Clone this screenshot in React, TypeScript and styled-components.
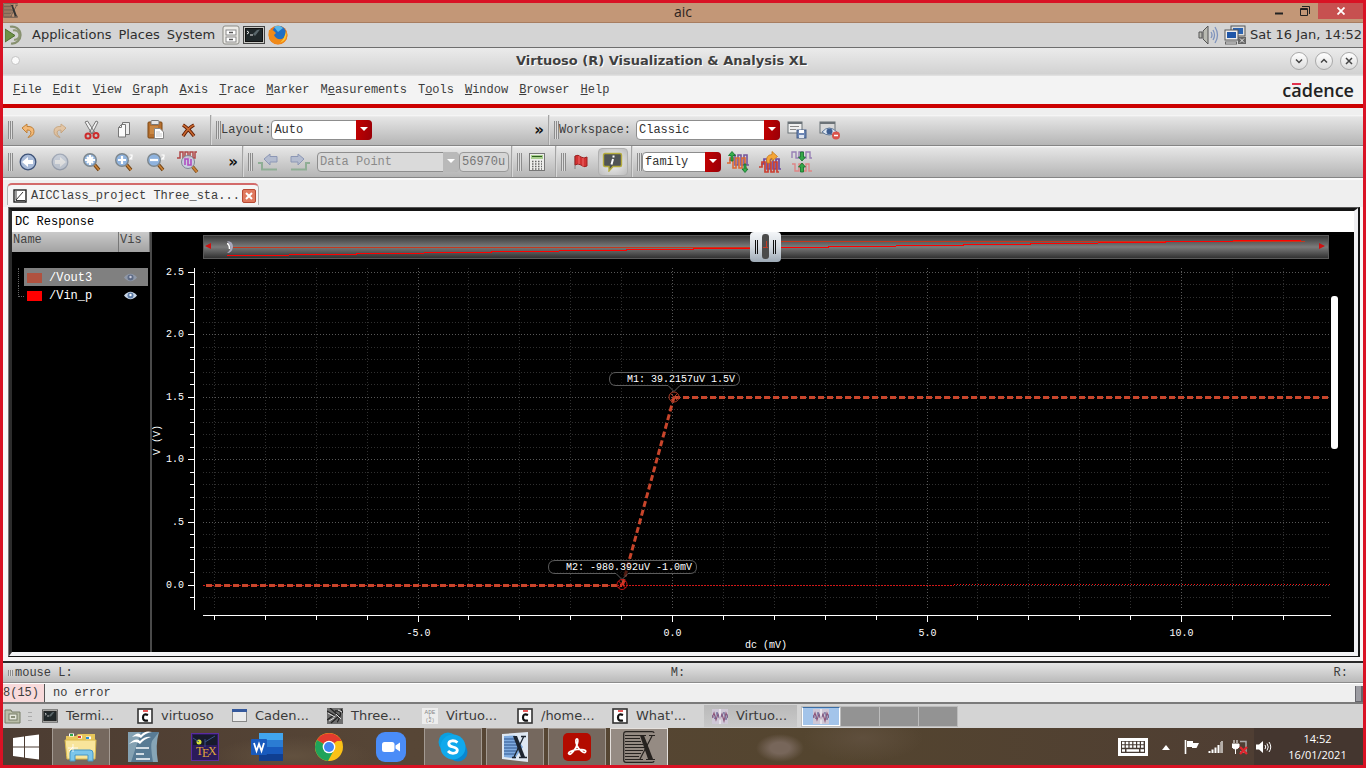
import React from "react";
import styled, { createGlobalStyle, css } from "styled-components";

const mono = `"Liberation Mono", monospace`;
const desk = `"DejaVu Sans", sans-serif`;
const win = `"Open Sans", sans-serif`;

const GlobalStyle = createGlobalStyle`
  * { box-sizing: border-box; }
  body { margin: 0; background: #d91224; }
  button, select, input { font: inherit; color: inherit; margin: 0; }
  button { padding: 0; border: 0; background: none; }
  svg { display: block; flex: none; }
`;

/* ---------- shell ---------- */
const Screen = styled.div`
  min-height: 100vh;
  display: flex;
  flex-direction: column;
  border: 3px solid #d91224;
  background: #efefef;
  font-family: ${mono};
  font-size: 12px;
  line-height: 16px;
  color: #3c3c3c;
`;
const HostTitle = styled.header`
  height: 20px;
  display: grid;
  grid-template-columns: 1fr auto 1fr;
  background: #c39777;
  border-bottom: 1px solid #a87d60;
  font: 14px/18px ${win};
  color: #2d2420;
`;
const HostControls = styled.div`
  display: flex;
  justify-content: flex-end;
  align-items: flex-start;
`;
const HostButton = styled.button<{ $close?: boolean }>`
  width: ${(p) => (p.$close ? 45 : 26)}px;
  height: 16px;
  display: flex;
  align-items: center;
  justify-content: center;
  background: ${(p) => (p.$close ? "#c75050" : "transparent")};
`;
const DeskPanel = styled.div`
  height: 25px;
  display: flex;
  align-items: center;
  gap: 7px;
  padding: 0 1px 0 2px;
  background: #d4d4d4;
  border-bottom: 1px solid #6e6e6e;
  font: 13px/20px ${desk};
  color: #2e2e2e;
`;
const PanelIcons = styled.div`
  display: flex;
  align-items: center;
  gap: 3px;
`;
const PanelTray = styled.div`
  margin-left: auto;
  display: flex;
  align-items: center;
  gap: 4px;
`;
const WindowTitle = styled.div`
  height: 28px;
  display: grid;
  grid-template-columns: 74px 1fr 74px;
  align-items: center;
  background: linear-gradient(#ebebeb, #d2d2d2 92%, #e4e4e4);
  font: bold 13px/18px ${desk};
  text-align: center;
  text-shadow: 1px 1px 0 #fff;
  color: #3f3f3f;
  padding: 0 5px 3px 8px;
`;
const TitleText = styled.span`
  padding-right: 46px;
`;
const Dot = styled.span`
  width: 9px;
  height: 9px;
  border-radius: 50%;
  background: #fafafa;
  border: 1px solid #c4c4c4;
`;
const WindowButtons = styled.div`
  display: flex;
  gap: 7px;
  justify-content: flex-end;
`;
const RoundButton = styled.button`
  width: 18px;
  height: 18px;
  border: 1px solid #a9a9a9;
  border-radius: 50%;
  background: linear-gradient(#fff, #dcdcdc);
  display: flex;
  align-items: center;
  justify-content: center;
`;
const MenuBar = styled.nav`
  height: 32px;
  display: flex;
  align-items: center;
  gap: 11px;
  padding: 0 9px 0 10px;
  background: #f3f3f3;
  border-bottom: 4px solid #cc0000;
`;
const Logo = styled.span`
  margin-left: auto;
  font: 600 18px/20px ${win};
  color: #222;
`;
const LogoA = styled.span`
  position: relative;
  &::before {
    content: "";
    position: absolute;
    left: 1px;
    right: 1px;
    top: 5px;
    height: 2px;
    background: #e2334d;
  }
`;

/* ---------- tool bars ---------- */
const ToolBars = styled.div`
  padding-top: 7px;
  border-bottom: 2px solid #fbfbfb;
`;
const ToolBar = styled.div`
  height: 32px;
  display: flex;
  border-bottom: 1px solid #858585;
  background: linear-gradient(#fafafa 0, #e5e5e5 2px, #b5b5b5);
  &:first-child { height: 31px; }
`;
const Section = styled.div<{ $w?: number }>`
  flex: ${(p) => (p.$w ? `0 0 ${p.$w}px` : "1 1 0")};
  min-width: 0;
  display: flex;
  align-items: center;
  gap: 2px;
  padding-left: 5px;
  & + & {
    border-left: 1px solid #a4a4a4;
    box-shadow: inset 1px 0 0 #d8d8d8;
  }
`;
const Grip = styled.span<{ $h?: number }>`
  flex: none;
  width: 5px;
  height: ${(p) => p.$h ?? 18}px;
  margin-right: -2px;
  background: repeating-linear-gradient(90deg, #8c8c8c 0 1px, #dcdcdc 1px 2px);
`;
const ToolButton = styled.button<{ $on?: boolean }>`
  flex: none;
  width: 30px;
  height: 28px;
  display: flex;
  align-items: center;
  justify-content: center;
  ${(p) =>
    p.$on &&
    css`
      background: radial-gradient(#f4f4f4, #bdbdbd);
      border: 1px solid #b0b0b0;
      border-radius: 4px;
    `}
`;
const More = styled.button`
  margin: 0 4px 0 auto;
  font: bold 15px/16px ${desk};
  color: #111;
`;
const Field = styled.label`
  display: flex;
  align-items: center;
`;
const Combo = styled.span<{ $w: number; $off?: boolean; $gap?: number }>`
  position: relative;
  display: block;
  width: ${(p) => p.$w}px;
  margin-left: ${(p) => p.$gap ?? 0}px;
  select {
    appearance: none;
    display: block;
    width: 100%;
    height: 20px;
    padding: 0 18px 0 2px;
    border: 1px solid #8d8d8d;
    border-radius: 4px;
    background: ${(p) => (p.$off ? "#dadada" : "#fff")};
    color: ${(p) => (p.$off ? "#8a8a8a" : "#333")};
    opacity: 1;
  }
`;
const ComboArrow = styled.span<{ $off?: boolean }>`
  position: absolute;
  right: 0;
  top: 0;
  width: 16px;
  height: 20px;
  border-radius: 0 4px 4px 0;
  pointer-events: none;
  background: ${(p) => (p.$off ? "#b9b9b9" : "linear-gradient(100deg, #c40000, #980008)")};
  &::after {
    content: "";
    position: absolute;
    left: 4px;
    top: 7px;
    border: 4px solid transparent;
    border-top-color: #fff;
    border-bottom: 0;
  }
`;
const ValueInput = styled.input`
  && {
    width: 50px;
    height: 20px;
    padding: 0 2px;
    margin-left: -2px;
    border: 1px solid #999;
    border-radius: 4px;
    background: #d6d6d6;
    color: #777;
  }
`;

/* ---------- tabs and plot frame ---------- */
const TabStrip = styled.div`
  height: 27px;
  padding: 3px 4px 0;
  display: flex;
`;
const Tab = styled.div`
  display: flex;
  align-items: center;
  height: 22px;
  gap: 4px;
  padding: 1px 2px 0 5px;
  background: #f5f5f5;
  border: 1px solid #b4b4b4;
  border-top: 2px solid #d36a6a;
  border-bottom: 0;
  border-radius: 5px 5px 0 0;
`;
const TabClose = styled.button`
  width: 14px;
  height: 14px;
  margin-left: -2px;
  border: 1px solid #b84a34;
  border-radius: 2px;
  background: #e07a5f;
  display: flex;
  align-items: center;
  justify-content: center;
`;
const PlotArea = styled.main`
  flex: 1;
  display: flex;
  padding: 0 3px 4px 5px;
  background: #f8f6f6;
  border-bottom: 2px solid #2a2a2a;
`;
const PlotOuter = styled.div`
  flex: 1;
  min-width: 0;
  display: flex;
  border-style: solid;
  border-width: 1px 2px 1px 1px;
  border-color: #555 #151515 #151515 #777;
`;
const PlotInner = styled.div`
  flex: 1;
  min-width: 0;
  display: flex;
  flex-direction: column;
  border-style: solid;
  border-width: 3px 4px 4px 3px;
  border-color: #151515 #efeff2 #f3f3f5 #2c2c2c;
  background: #000;
`;
const PlotTitle = styled.h1`
  margin: 0;
  height: 21px;
  padding: 1px 3px 0;
  background: #fff;
  color: #000;
  font: 12px/21px ${mono};
`;
const PlotBody = styled.div`
  flex: 1;
  display: flex;
`;
const Legend = styled.div`
  flex: none;
  width: 140px;
  border-right: 2px solid #4a4a4a;
`;
const TraceTable = styled.table`
  width: 100%;
  border-collapse: collapse;
  table-layout: fixed;
  color: #fff;
  th {
    height: 20px;
    padding: 0 0 0 1px;
    text-align: left;
    vertical-align: top;
    font-weight: normal;
    color: #444;
    background: linear-gradient(#cacaca, #a2a2a2);
    border-right: 1px solid #777;
  }
  tbody::before {
    content: "";
    display: block;
    height: 16px;
  }
  td { padding: 0; height: 18px; }
`;
const NameCell = styled.div`
  display: flex;
  height: 18px;
  line-height: 18px;
`;
const Branch = styled.span<{ $last?: boolean }>`
  width: 12px;
  padding-left: 6px;
  &::before {
    content: "";
    display: block;
    height: ${(p) => (p.$last ? 10 : 18)}px;
    border-left: 1px dotted #666;
    border-bottom: ${(p) => (p.$last ? "1px dotted #666" : "0")};
  }
`;
const TraceName = styled.span<{ $sel?: boolean }>`
  flex: 1;
  display: flex;
  align-items: center;
  gap: 7px;
  padding: 1px 0 0 3px;
  background: ${(p) => (p.$sel ? "#808080" : "transparent")};
`;
const Swatch = styled.span<{ $c: string }>`
  width: 15px;
  height: 10px;
  background: ${(p) => p.$c};
`;
const EyeButton = styled.button<{ $sel?: boolean }>`
  width: 29px;
  height: 18px;
  display: flex;
  align-items: center;
  padding-left: 5px;
  background: ${(p) => (p.$sel ? "#808080" : "transparent")};
`;
const ChartSvg = styled.svg`
  flex: 1 1 0;
  min-width: 0;
  background: #000;
  font: 10px ${mono};
`;

/* ---------- status rows ---------- */
const MouseBar = styled.div`
  height: 20px;
  display: grid;
  grid-template-columns: 1fr auto 1fr;
  align-items: center;
  padding: 0 15px 0 5px;
  background: linear-gradient(#e6e6e6, #bababa);
  border-bottom: 1px solid #8c8c8c;
  span:last-child { text-align: right; }
`;
const MouseLeft = styled.span`
  display: flex;
  align-items: center;
  gap: 4px;
`;
const StatusBar = styled.div`
  height: 21px;
  display: flex;
  align-items: stretch;
  border-top: 1px solid #fff;
  border-bottom: 2px solid #7a7a7a;
  line-height: 19px;
`;
const StatusCode = styled.span`
  width: 42px;
  overflow: hidden;
  background: #f8dadb;
  border-right: 1px solid #555;
`;
const StatusText = styled.span`
  flex: 1;
  padding-left: 8px;
`;
const StatusBlock = styled.span`
  width: 8px;
  margin-top: 2px;
  background: #9c9ca2;
  border: 1px solid #66666c;
  border-width: 0 2px 1px 1px;
`;
const WindowList = styled.div`
  height: 24px;
  display: flex;
  align-items: center;
  padding-left: 1px;
  background: #d4d4d4;
  font: 13px/20px ${desk};
  color: #3a3a3a;
`;
const ListGrip = styled.span`
  width: 4px;
  height: 9px;
  margin: 0 2px 0 7px;
  background: repeating-linear-gradient(#aaa 0 1px, transparent 1px 4px);
`;
const TaskButton = styled.button<{ $on?: boolean }>`
  width: 95px;
  height: 22px;
  display: flex;
  align-items: center;
  gap: 8px;
  padding: 0 0 0 8px;
  white-space: nowrap;
  ${(p) =>
    p.$on &&
    css`
      width: 93px;
      margin-left: 5px;
      background: linear-gradient(#b9b9b9, #c9c9c9);
    `}
`;
const Pager = styled.div`
  margin-left: 4px;
  display: flex;
  gap: 1px;
  padding: 1px;
  background: #bcbcbc;
`;
const Desk = styled.button<{ $on?: boolean }>`
  width: 38px;
  height: 19px;
  background: ${(p) => (p.$on ? "#a3c4ea" : "#939393")};
  border: ${(p) => (p.$on ? "1px solid #fff" : "0")};
  border-top-color: #3c6ea5;
  display: flex;
  align-items: center;
  justify-content: center;
`;

/* ---------- host task bar ---------- */
const TaskBar = styled.footer`
  height: 37px;
  display: flex;
  align-items: stretch;
  gap: 4px;
  background:
    radial-gradient(ellipse 24px 14px at 777px 20px, #77665a 40%, transparent),
    radial-gradient(ellipse 60px 24px at 860px 10px, #5f4f3d, transparent),
    radial-gradient(ellipse 80px 20px at 290px 28px, #62513f, transparent),
    linear-gradient(90deg, #4c3c32, #574636 30%, #54452f 60%, #4f3e33 92%, #44362f 92%);
  font: 11px/16px ${win};
  color: #fff;
`;
const AppButton = styled.button<{ $open?: boolean; $focus?: boolean }>`
  width: 58px;
  display: flex;
  align-items: center;
  justify-content: center;
  ${(p) =>
    p.$open &&
    css`
      background: ${p.$focus ? "#958b83" : "#75685e"};
      border: 1px solid ${p.$focus ? "#e4e0dc" : "#a39a92"};
      border-bottom: 0;
    `}
`;
const StartButton = styled(AppButton)`
  width: 45px;
`;
const Tray = styled.div`
  margin-left: auto;
  display: flex;
  align-items: center;
  gap: 8px;
`;
const Clock = styled.time`
  width: 83px;
  padding-right: 8px;
  text-align: center;
`;

/* ---------- icons ---------- */
type IcoProps = { w?: number; h?: number; box?: string; children: React.ReactNode };
const Ico = ({ w = 18, h = w, box, children }: IcoProps) => (
  <svg width={w} height={h} viewBox={box ?? `0 0 ${w} ${h}`} fill="none" aria-hidden="true">{children}</svg>
);

const XMark = ({ w = 15, h = 15, c = "#333" }) => (
  <Ico w={w} h={h} box="0 0 32 32">
    <path d="M31 2Q31 0.700 29 0.700H3Q0.700 0.700 0.700 3V29Q0.700 31.300 3 31.300H29Q31 31.300 31 30" stroke={c} strokeWidth="1.200" />
    <path d="M2 4.500H16M2 7.500H17M2 10.500H18M2 13.500H20M2 16.500H22M2 19.500H20M2 22.500H18M2 25.500H16M2 28.500H14" stroke={c} strokeWidth="1.100" />
    <path d="M17 4.500H21L30 28H25Z" fill={c} />
    <path d="M15 4.500H23M26 4.500H32M29 5L17 28M14 28.500H20M23 28.500H32" stroke={c} strokeWidth="1.200" />
  </Ico>
);
const Speaker = () => (
  <Ico w={22} h={20}>
    <path d="M1 7H4V13H1Z M5 6L10 1V19L5 14Z" fill="#b9bab2" stroke="#555" />
    <path d="M13 7Q15 10 13 13 M15 5Q18 10 15 15 M17 2Q22 10 17 18" stroke="#7e93bd" strokeWidth="1.300" />
  </Ico>
);
const Computers = () => (
  <Ico w={22} h={20}>
    <rect x="7" y="1" width="14" height="10" fill="#ddd" stroke="#555" />
    <rect x="9" y="3" width="10" height="6" fill="#2b63b0" />
    <rect x="1" y="5" width="13" height="10" fill="#eee" stroke="#555" />
    <rect x="3" y="7" width="9" height="6" fill="#1f56a8" />
    <path d="M1 18H13" stroke="#666" strokeWidth="3" /><path d="M2 18H12" stroke="#eee" />
    <rect x="14" y="12" width="8" height="7" fill="#666" /><path d="M16 13.500L20 17.500M20 13.500L16 17.500" stroke="#eee" />
  </Ico>
);
const Mate = () => (
  <Ico w={20} h={20}>
    <path d="M5 1.800A8.500 8.500 0 1 1 6 18.500" stroke="#87906f" strokeWidth="2.200" />
    <path d="M8 5.500A4.800 4.800 0 1 1 9 14.800" stroke="#8d9872" strokeWidth="2" />
    <path d="M0 4L10 10.500 0 17Z" fill="#6e9247" stroke="#4f6f30" />
  </Ico>
);
const Cabinet = () => (
  <Ico w={18} h={20}>
    <rect x="1" y="1" width="16" height="18" rx="2" fill="#ecebe7" stroke="#8b8b85" />
    <rect x="4" y="5" width="10" height="5" fill="#fff" stroke="#888" /><rect x="4" y="12" width="10" height="5" fill="#fff" stroke="#888" />
    <path d="M7 7.500H11 M7 14.500H11" stroke="#555" strokeWidth="1.500" />
  </Ico>
);
const Terminal = ({ w = 22, h = 18 }) => (
  <Ico w={w} h={h} box="0 0 22 18">
    <rect x=".5" y=".5" width="21" height="17" fill="#c9c9c5" stroke="#444" />
    <rect x="2.500" y="2.500" width="17" height="13" fill="#20282a" stroke="#111" />
    <path d="M4 5L6 6.500 4 8 M7 9H10" stroke="#eee" /><path d="M10 8L14 4 17 3.500 12 10Z" fill="#59666a" />
  </Ico>
);
const Firefox = () => (
  <Ico w={20} h={20}>
    <circle cx="10" cy="10" r="9.500" fill="#ef7416" />
    <circle cx="11" cy="8" r="7" fill="#1f6fc4" /><path d="M6 2A7 7 0 0 1 15 3L10 7Z" fill="#58b8ea" />
    <path d="M1 5Q5 4 8 8 L6 10Q8 15 14 14 18 12 18 5 22 14 14 18.500 5 21 1.500 14 0 9 1 5Z" fill="#f08a18" />
    <path d="M18 6Q20 15 12 18 17 13 18 6Z" fill="#fcc838" />
  </Ico>
);
const Chevron = ({ d }: { d: string }) => <Ico w={8} h={8}><path d={d} stroke="#444" strokeWidth="1.500" /></Ico>;

const Undo = ({ flip = false }) => (
  <svg width="16" height="16" viewBox="0 0 16 16" transform={flip ? "scale(-1 1)" : undefined} opacity={flip ? 0.5 : 1} aria-hidden="true">
    <path d="M2 6L7 2V4.500Q14 4 14 9.500 14 14 8 15.500 11.500 12.500 11 10 10 7.500 7 8V11Z" fill="#f3b977" stroke="#bf8038" strokeLinejoin="round" />
  </svg>
);
const Cut = () => (
  <Ico w={18} h={20}>
    <path d="M2 2L4.500 1 11.500 12 9 14Z M15 2L13 1 6.500 12 9 14Z" fill="#f2f2f2" stroke="#777" />
    <ellipse cx="5" cy="16" rx="2.500" ry="2.500" stroke="#cc2b2b" strokeWidth="2" /><ellipse cx="13" cy="15.500" rx="2.500" ry="2.500" stroke="#cc2b2b" strokeWidth="2" />
  </Ico>
);
const Copy = () => (
  <Ico w={16} h={18}>
    <path d="M6.500 1.500H13.500V13.500H6.500Z" fill="#eee" stroke="#777" />
    <path d="M2.500 6.500L5.500 3.500H9.500V16H2.500Z" fill="#fbfbfb" stroke="#777" />
    <path d="M2.500 6.500H5.500V3.500" stroke="#777" />
  </Ico>
);
const Paste = () => (
  <Ico w={18} h={20}>
    <rect x="1" y="2" width="14" height="16" rx="1" fill="#b5702f" stroke="#7d4714" />
    <rect x="4" y="0.500" width="8" height="4" rx="1" fill="#e6e6e6" stroke="#777" />
    <path d="M3 6H11V14H3Z" fill="#c98844" /><path d="M7.500 8.500H13L16.500 12V18.500H7.500Z" fill="#fff" stroke="#888" />
    <path d="M9 12H13M9 14H15M9 16H15" stroke="#ccc" />
  </Ico>
);
const Delete = () => (
  <Ico w={15} h={15}><path d="M2 2Q7 5 13 13 M13 2Q7 5 2 13" stroke="#5c1a05" strokeWidth="3.400" /><path d="M2 2Q7 5 13 13 M13 2Q7 5 2 13" stroke="#c9682e" strokeWidth="1.500" /></Ico>
);
const SaveWs = () => (
  <Ico w={20} h={20}>
    <rect x="1" y="2" width="14" height="11" fill="#f0f0f0" stroke="#6b7277" /><path d="M1 3H15" stroke="#6b7277" strokeWidth="2" /><path d="M3 6.500H12M3 9.500H9" stroke="#888" />
    <rect x="10" y="10" width="9" height="8" fill="#6d87b5" stroke="#455c86" /><rect x="12" y="10" width="5" height="3" fill="#fff" /><rect x="12" y="15" width="5" height="3" fill="#dde4f0" />
  </Ico>
);
const HideWs = () => (
  <Ico w={21} h={20}>
    <rect x="1" y="2" width="15" height="11" fill="#d8d8d8" stroke="#6b7277" /><path d="M1 3H16" stroke="#6b7277" strokeWidth="2" />
    <path d="M3 12Q10 4 18 12 10 18 3 12Z" fill="#dfe8f3" stroke="#5f7898" /><circle cx="10.500" cy="11.500" r="3" fill="#3e5f92" />
    <circle cx="17" cy="15.500" r="4" fill="#d9534c" /><path d="M15 15.500H19" stroke="#fff" strokeWidth="1.500" />
  </Ico>
);
const Nav = ({ flip = false }) => (
  <svg width="18" height="18" viewBox="0 0 18 18" fill="none" transform={flip ? "scale(-1 1)" : undefined} opacity={flip ? 0.35 : 1} aria-hidden="true">
    <circle cx="9" cy="9" r="7.800" fill="#a9bbd8" stroke="#3d5278" strokeWidth="1.300" />
    <path d="M3 9L9 4V7H14V11H9V14Z" fill="#fff" />
  </svg>
);
const Lens = ({ mark, two }: { mark: string; two?: boolean }) => (
  <Ico w={20} h={20}>
    <path d="M11.500 11.500L17 18" stroke="#6e4113" strokeWidth="3.500" /><path d="M12 12L17 18" stroke="#c98137" strokeWidth="1.800" />
    <circle cx="8" cy="8" r="6.300" fill="#8fb3de" stroke="#7d868c" strokeWidth="1.400" />
    <path d={mark} stroke="#fff" strokeWidth="2.200" />
    {two && <path d="M15.500 3H18V5L16 7H18.500" stroke="#fff" strokeWidth="1.200" />}
  </Ico>
);
const WaveLens = () => (
  <Ico w={22} h={24}>
    <path d="M0 8H3V2H6V8H8V2H11V8H13V2H16V8H18V2H20" stroke="#b04848" strokeWidth="1.500" />
    <path d="M15 16L20 22" stroke="#6e4113" strokeWidth="3.500" /><path d="M15 16L20 22" stroke="#c98137" strokeWidth="2" />
    <circle cx="11" cy="12" r="6.500" fill="#c9cfe2" fillOpacity=".85" stroke="#7e8794" /><path d="M8 15V9H11V15H14V9" stroke="#b04cc0" strokeWidth="1.600" />
  </Ico>
);
const Step = ({ flip = false }) => (
  <svg width="20" height="20" viewBox="0 0 20 20" fill="none" transform={flip ? "scale(-1 1)" : undefined} aria-hidden="true">
    <path d="M6 7L12 2V4.500H19V10H12V13Z" fill="#b4bccf" stroke="#8c97b5" /><path d="M0 11H4V17.500H19" stroke="#8fae95" strokeWidth="2" />
  </svg>
);
const Calculator = () => (
  <Ico w={16} h={18}>
    <rect x=".5" y=".5" width="15" height="17" fill="#ededeb" stroke="#777" /><rect x="2" y="2" width="12" height="4" fill="#a8cf8e" /><path d="M3 3.500H13" stroke="#2e5c1e" />
    <path d="M3 8.500H13M3 11H13M3 13.500H13M3 16H13" stroke="#666" strokeWidth="1.500" strokeDasharray="1.500 1.500" />
  </Ico>
);
const RedFlag = () => (
  <Ico w={16} h={16}>
    <path d="M2 2V15" stroke="#999" strokeWidth="1.500" /><path d="M2 2Q5 0 8 3 11 5 14 3V12Q11 14 8 11 5 9 2 11Z" fill="#d23232" stroke="#9b2020" /><path d="M6 2V10M10 4V13" stroke="#ee6b6b" />
  </Ico>
);
const Info = () => (
  <Ico w={22} h={20}>
    <path d="M3 1.500H18Q19.500 1.500 19.500 3V13Q19.500 14.500 18 14.500H11L7 19V14.500H3Q1.500 14.500 1.500 13V3Q1.500 1.500 3 1.500Z" fill="#505455" stroke="#b5ac3c" strokeWidth="1.400" />
    <path d="M11.500 3.500V5.500M11 7L9.500 12.500" stroke="#fff" strokeWidth="2" />
  </Ico>
);
const Wave = "M0 9H3V4H6V14H9V4H12V14H15V4H18V14H20";
const WaveArrows = () => (
  <Ico w={22} h={22}>
    <path d={Wave} transform="translate(2 0)" stroke="#75559b" strokeWidth="1.600" /><path d={Wave} transform="translate(0 3)" stroke="#dd6a32" strokeWidth="1.600" />
    <path d="M4 10V4.500H1.500L5 0.500 8.500 4.500H6V10Z M17 13V18H15L18 21.500 21 18H19V13Z" fill="#35b04a" stroke="#12702a" strokeWidth=".8" />
  </Ico>
);
const WaveTurn = () => (
  <Ico w={22} h={22}>
    <path d={Wave} transform="translate(2 4)" stroke="#6c4aa0" strokeWidth="1.700" /><path d={Wave} transform="translate(0 7)" stroke="#cc3e30" strokeWidth="1.700" />
    <path d="M8 12Q6 4 13 3.500V0.500L18.500 5.500 13 10V7Q10 7.500 11 12Z" fill="#f5a637" stroke="#c67818" strokeWidth=".8" />
  </Ico>
);
const WaveSqueeze = () => (
  <Ico w={22} h={24}>
    <path d="M1 8V2H5V8H8V2H12V8H15V2H19V8H21" stroke="#9880b5" strokeWidth="1.400" /><path d="M1 14H4V21H8V14H12V21H15V14H18V21H21" stroke="#e08585" strokeWidth="1.400" />
    <path d="M9.500 2H12.500V7H14.500L11 11 7.500 7H9.500Z M9.500 22H12.500V17H14.500L11 13 7.500 17H9.500Z" fill="#35a848" stroke="#12702a" strokeWidth=".8" />
  </Ico>
);
const PlotIcon = () => (
  <Ico w={14} h={14}><rect x="1" y="1" width="12" height="12" fill="#fff" stroke="#222" strokeWidth="1.400" /><path d="M3 2V11.500H12M3 11L10 3" stroke="#222" strokeWidth=".9" /></Ico>
);
const Eye = ({ dim = false }) => (
  <Ico w={13} h={9}>
    <path d="M0 4.500Q6.500 -3 13 4.500 6.500 12 0 4.500Z" fill={dim ? "#8f98a8" : "#c8d6e8"} /><circle cx="6.500" cy="4.500" r="3" fill={dim ? "#5d6b85" : "#5c7ba6"} /><circle cx="6.500" cy="4" r="1.200" fill={dim ? "#ccd" : "#fff"} />
  </Ico>
);
const CIcon = () => (
  <Ico w={16} h={16}><rect x="1" y="1" width="14" height="14" fill="#fff" stroke="#333" strokeWidth="1.600" /><path d="M11 7Q6 5 6 9.500 6 13.500 11 12.500" stroke="#111" strokeWidth="2.200" /><path d="M6 3H11" stroke="#d22" strokeWidth="1.500" /></Ico>
);
const FormIcon = () => (
  <Ico w={15} h={14}><rect x=".5" y=".5" width="14" height="12" fill="#ececec" stroke="#888" /><rect x="0" y="0" width="15" height="3" fill="#35599c" /></Ico>
);
const SchematicIcon = () => (
  <Ico w={16} h={16}><rect width="16" height="16" fill="#6d6d6d" /><path d="M0 3L7 7 0 12M3 0L12 8 4 15M8 3Q15 2 13 8T10 14M14 1L16 5" stroke="#222" strokeWidth="1.300" /><path d="M1 5L8 9M9 6L14 11M11 2L15 4M2 13L7 10" stroke="#ddd" /></Ico>
);
const AdeIcon = () => (
  <Ico w={16} h={16}><rect width="16" height="16" fill="#ededed" /><text x="8" y="6" fontSize="6" textAnchor="middle" fill="#888" fontFamily="Liberation Mono">ADE</text><text x="8" y="10" fontSize="5" textAnchor="middle" fill="#888" fontFamily="Liberation Mono">L</text><text x="8" y="14" fontSize="5" textAnchor="middle" fill="#888" fontFamily="Liberation Mono">(2)</text></Ico>
);
const VivaIcon = () => (
  <Ico w={16} h={15}><rect width="16" height="15" fill="#cfc8d6" /><path d="M0 9L2 4 4 11 6 5 8 10 10 5 12 12 14 4 16 9" stroke="#8d5478" strokeWidth="1.100" /><path d="M0 6L3 10 5 3 7 9 10 7 12 3 14 11 16 5" stroke="#6f6a98" strokeWidth=".8" /><path d="M8 0V15" stroke="#fff" /></Ico>
);
const DeskFolder = () => (
  <Ico w={17} h={15}><path d="M1 3.500V1H7L8 3H16V14H1Z" fill="#b9bda8" stroke="#777c66" /><rect x="5" y="5" width="8" height="6" fill="#e6e8dd" stroke="#777c66" /><path d="M7 7H11V9H7Z" fill="#8b907a" /></Ico>
);

const StartLogo = () => (
  <Ico w={28} h={26}><path d="M1 4L12 2.500V12.500H1ZM13 2.300L27 0.500V12.500H13ZM1 13.500H12V23.500L1 22ZM13 13.500H27V25.500L13 23.700Z" fill="#fff" /></Ico>
);
const Explorer = () => (
  <Ico w={34} h={30}>
    <path d="M2 4H12L14 2H31V24H2Z" fill="#e7c65a" /><path d="M5 3H10M14 5H18M22 6H27" stroke="#fff" strokeWidth="3" /><path d="M6 3H9" stroke="#2fa84c" strokeWidth="2" /><path d="M14 5H17" stroke="#d83c2d" strokeWidth="2" /><path d="M22 6H25" stroke="#2c8fd4" strokeWidth="2" />
    <path d="M1 8H32L31 27H3Z" fill="#f8e59b" stroke="#d9b94c" /><path d="M6 29V21Q6 18 9 18H26Q29 18 29 21V29H24V23H11V29Z" fill="#7cc6ea" stroke="#4796c4" /><path d="M5 19L9 15M9 12V20M4 16H14" stroke="#fff" opacity=".8" />
  </Ico>
);
const Writer = () => (
  <Ico w={32} h={32}>
    <path d="M1 1H32L28 9Q26 13 29 31H1Z" fill="#587b94" /><path d="M1 1H14L4 31H1Z" fill="#90abb9" opacity=".8" /><path d="M32 1L25 10Q23 14 26 31H31Q28 14 32 1Z" fill="#86a5b6" />
    <path d="M5 6Q11 0 14 4 18 -1 25 1 18 2 14 7 10 4 5 6ZM2 13Q9 6 13 10 18 5 24 6 17 8 13 13 9 9 2 13Z" fill="#fff" /><path d="M9 17H22M9 23H17M9 28H23" stroke="#d3dde4" strokeWidth="2.200" />
  </Ico>
);
const TexIcon = () => (
  <Ico w={28} h={28}>
    <rect x=".5" y=".5" width="27" height="27" fill="#2b1b5a" stroke="#5a2ba0" /><path d="M2 2H26V12H2Z" fill="#171a2c" /><circle cx="8" cy="9" r="2.500" fill="#d8e639" /><path d="M8 9L2 5M14 9L24 3M14 14V6" stroke="#38528a" />
    <text x="5" y="22" fontSize="12" fill="#e0a83a" fontFamily="Liberation Serif">T</text><text x="11" y="24" fontSize="12" fill="#e0a83a" fontFamily="Liberation Serif">E</text><text x="17" y="22" fontSize="12" fill="#e0a83a" fontFamily="Liberation Serif">X</text>
  </Ico>
);
const Word = () => (
  <Ico w={32} h={28}>
    <path d="M8 0H32V7H8Z" fill="#41a5ee" /><path d="M8 7H32V14H8Z" fill="#2b7cd3" /><path d="M8 14H32V21H8Z" fill="#185abd" /><path d="M8 21H32V28H8Z" fill="#103f91" />
    <rect x="0" y="6" width="16" height="16" rx="1" fill="#185abd" /><path d="M3 10L5.500 18 8 11 10.500 18 13 10" stroke="#fff" strokeWidth="1.800" />
  </Ico>
);
const Chrome = () => (
  <Ico w={28} h={28}>
    <circle cx="14" cy="14" r="14" fill="#fbc116" /><path d="M14 14L1.900 7A14 14 0 0 1 26.500 8H14Z" fill="#e33b2e" /><path d="M14 14L1.900 7A14 14 0 0 0 13 28L19 17Z" fill="#1fa35a" /><path d="M14 8H26.400L22 8 14 14 9 11Z" fill="#e33b2e" />
    <circle cx="14" cy="14" r="6.300" fill="#fff" /><circle cx="14" cy="14" r="5" fill="#4285f4" />
  </Ico>
);
const ZoomApp = () => (
  <Ico w={30} h={30}><rect width="30" height="30" rx="9" fill="#4a8cf7" /><rect x="6" y="10" width="12.500" height="10" rx="2.500" fill="#fff" /><path d="M19.500 13.500L24 10.500V19.500L19.500 16.500Z" fill="#fff" /></Ico>
);
const Skype = () => (
  <Ico w={30} h={30}><circle cx="10" cy="10" r="9.500" fill="#0a9fe0" /><circle cx="20" cy="20" r="9.500" fill="#0a86cf" /><circle cx="15" cy="15" r="12.500" fill="#10a9ec" /><path d="M19.500 10.500Q17 8.500 14 8.800 10.500 9.300 10.800 12 11 14.200 15 15 19.600 16 19.300 18.600 18.800 21.300 15 21.300 11.800 21.200 10 19" stroke="#fff" strokeWidth="2.800" /></Ico>
);
const XLaunch = () => (
  <Ico w={28} h={30}><path d="M1 2L27 0V30L1 27Z" fill="#dfe8f2" /><path d="M3 4L14 3.500 22 15 14 26.500 3 25Z" fill="#7fabdf" /><path d="M3 7H15M3 10H16M3 13H17M3 16H17M3 19H15M3 22H14" stroke="#33588f" strokeWidth="1.200" /><path d="M12 4H16L24 25H20Z" fill="#1d2530" /><path d="M23 4L13 25M20 4.500H25M11 25.500H15M18 25.500H26" stroke="#1d2530" strokeWidth="1.300" /></Ico>
);
const Acrobat = () => (
  <Ico w={28} h={28}><rect width="28" height="28" rx="5" fill="#b30b00" /><path d="M6 21C4 20 9 17 14 16.500S24 17 22.500 19 16 17 14 12.500 13 5.500 14.300 6 14.500 13 11 17.500 7 21.500 6 21Z" stroke="#fff" strokeWidth="1.700" /></Ico>
);
const Keyboard = () => (
  <Ico w={30} h={18}>
    <rect x=".5" y=".5" width="29" height="17" fill="#463a33" stroke="#fff" /><rect x="1" y="1" width="28" height="16" fill="#fff" />
    <rect x="3" y="3" width="24" height="12" fill="#463a33" />
    <path d="M4 5H26M4 8.500H26" stroke="#fff" strokeWidth="2.400" strokeDasharray="2.600 1.200" /><path d="M4 12.500H7M8.500 12.500H21M22.500 12.500H26" stroke="#fff" strokeWidth="2.400" />
  </Ico>
);
const TrayFlag = () => <Ico w={16} h={16}><path d="M1.500 1V15" stroke="#fff" strokeWidth="1.600" /><path d="M3 2H9V4H15L12.500 9H8V8H3Z" fill="#fff" /></Ico>;
const Signal = () => <Ico w={16} h={13}><path d="M1.500 13V11M4.500 13V9.500M7.500 13V7.500M10.500 13V5M13.500 13V2" stroke="#fff" strokeWidth="2" /><path d="M14 13V1" stroke="#b5aea8" strokeWidth="2" /></Ico>;
const Battery = () => <Ico w={16} h={16}><path d="M2 1V4M5 1V4M0 5H7V8Q6 10 3.500 10 1 10 0 8Z M3.500 9V15" fill="#fff" stroke="#fff" /><path d="M8 2.500H14V13H8" stroke="#aaa" strokeWidth="1.500" /><path d="M8 8L15 15M15 8L8 15" stroke="#e0262e" strokeWidth="2.400" /></Ico>;
const Volume = () => <Ico w={16} h={14}><path d="M0 4.500H3L7 1V13L3 9.500H0Z" fill="#fff" /><path d="M9 5Q10.500 7 9 9M11 3.500Q13.500 7 11 10.500M13 2Q16.500 7 13 12" stroke="#fff" /></Ico>;

/* ---------- chart ---------- */
const range = (a: number, b: number) => Array.from({ length: b - a + 1 }, (_, i) => a + i);
const px = (mv: number) => Math.floor(672.5 + 50.9 * mv) + 0.5;
const py = (tenths: number) => Math.floor(585 - 12.52 * tenths) + 0.5;
const xTicks = range(-9, 12);
const yTicks = range(-1, 25);
const yNames = ["0.0", ".5", "1.0", "1.5", "2.0", "2.5"];

const Chart = () => (
  <ChartSvg viewBox="152 232 1202 420" role="img" aria-label="DC response, V (V) against dc (mV)">
    <defs>
      <linearGradient id="strip" x2="0" y2="1"><stop stopColor="#343434" /><stop offset=".5" stopColor="#7b7b7b" /><stop offset="1" stopColor="#2e2e2e" /></linearGradient>
      <linearGradient id="knob" x2="0" y2="1"><stop stopColor="#f4f6f8" /><stop offset=".5" stopColor="#d5dbe1" /><stop offset="1" stopColor="#9da9b5" /></linearGradient>
    </defs>
    <rect x="203.500" y="235.500" width="1125" height="23" fill="url(#strip)" stroke="#595959" />
    <path d="M205 246L211 243V249Z M1325 246L1319 243V249Z" fill="#d01010" />
    <path d="M232 247.500H765V241.500H1305" stroke="#c4371c" fill="none" />
    <path d="M227 255.500H289" stroke="#f00" />
    {range(0, 14).map((i) => (
      <path key={i} d={`M${Math.round(289 + i * 67.4)} ${254.5 - i}h68`} stroke="#f00" />
    ))}
    <path d="M227 241Q233 241 233 247 232 253 227 253Q231 250 230.500 247 230.500 244 227 241Z" fill="#a9a9bd" />
    <path d="M227 243.500Q229.500 244 229.500 249" stroke="#fff" strokeWidth="1.500" fill="none" />
    <rect x="750" y="232" width="31" height="30" rx="4" fill="url(#knob)" />
    <path d="M755.500 240V254M757.500 240V254M773.500 240V254M775.500 240V254" stroke="#111" />
    <rect x="762" y="234" width="7" height="25" rx="3" fill="#4b4b4b" />
    <path d="M766.500 241V247M763 247.500H768" stroke="#c23a24" fill="none" />

    <g shapeRendering="crispEdges" fill="none">
      {yTicks.map((t) => <path key={t} d={`M203 ${py(t)}H1329`} stroke={t % 5 ? "#303030" : "#585858"} strokeDasharray="1 2" />)}
      {xTicks.map((t) => <path key={t} d={`M${px(t)} 268V609`} stroke={t % 5 ? "#303030" : "#585858"} strokeDasharray="1 2" />)}
      <path d={`M194.500 268V610M203 615.500H1331${yTicks.map((t) => `M${t % 5 ? 190 : 188} ${py(t)}H194`).join("")}${xTicks.map((t) => `M${px(t)} 616V${t % 5 ? 620 : 622}`).join("")}`} stroke="#fff" />
      <path d="M203 585.500H954" stroke="#d01818" strokeDasharray="2 1" />
      <path d="M954 584.500H1330" stroke="#ff1010" strokeDasharray="1 2" />
      <path d="M206 585.500H622" stroke="#c8452b" strokeWidth="3" strokeDasharray="6 3" />
      <path d="M674 397.500H1329" stroke="#c8452b" strokeWidth="3" strokeDasharray="6 3" />
    </g>
    <path d="M622.500 585L674 397" stroke="#c8452b" strokeWidth="3" strokeDasharray="6 3" />

    <g fill="#fff">
      {yNames.map((n, i) => <text key={n} x="184" y={Math.floor(py(i * 5)) + 3} textAnchor="end">{n}</text>)}
      {[-5, 0, 5, 10].map((v) => <text key={v} x={px(v)} y="636" textAnchor="middle">{v.toFixed(1)}</text>)}
      <text x="766" y="648" textAnchor="middle">dc (mV)</text>
      <text transform="translate(160 440) rotate(-90)" textAnchor="middle">V (V)</text>
    </g>
    <g stroke="#5c5c5c" fill="#000" fillOpacity=".6">
      <path d="M616 372.500H733Q739.500 372.500 739.500 379 739.500 385.500 733 385.500H680L674 391.500 668 385.500H616Q609.500 385.500 609.500 379 609.500 372.500 616 372.500Z" />
      <path d="M555 560.500H690Q696.500 560.500 696.500 567 696.500 573.500 690 573.500H628L622 579.500 616 573.500H555Q548.500 573.500 548.500 567 548.500 560.500 555 560.500Z" />
    </g>
    <g fill="none">
      <circle cx="674" cy="397" r="5" stroke="#a83a26" /><path d="M670.500 393.500L677.500 400.500M677.500 393.500L670.500 400.500" stroke="#a83a26" />
      <circle cx="622" cy="584.500" r="5" stroke="#c01414" /><path d="M618.500 581L625.500 588M625.500 581L618.500 588" stroke="#e01a1a" />
    </g>
    <g fill="#fff">
      <text x="627" y="382">M1: 39.2157uV 1.5V</text>
      <text x="566" y="570">M2: -980.392uV -1.0mV</text>
    </g>
    <rect x="1331" y="296" width="7" height="153" rx="3" fill="#fff" />
  </ChartSvg>
);

const menus: [string, number][] = [
  ["File", 0], ["Edit", 0], ["View", 0], ["Graph", 0], ["Axis", 0], ["Trace", 0], ["Marker", 0],
  ["Measurements", 1], ["Tools", 1], ["Window", 0], ["Browser", 0], ["Help", 0],
];
const windows: [string, React.ReactNode][] = [
  ["Termi...", <Terminal key="i" w={16} h={14} />], ["virtuoso", <CIcon key="i" />], ["Caden...", <FormIcon key="i" />],
  ["Three...", <SchematicIcon key="i" />], ["Virtuo...", <AdeIcon key="i" />], ["/home...", <CIcon key="i" />],
  ["What'...", <CIcon key="i" />], ["Virtuo...", <VivaIcon key="i" />],
];
const apps: [string, React.ReactNode, boolean][] = [
  ["File Explorer", <Explorer key="i" />, true], ["OpenOffice", <Writer key="i" />, false], ["TeX editor", <TexIcon key="i" />, false],
  ["Word", <Word key="i" />, false], ["Chrome", <Chrome key="i" />, false], ["Zoom", <ZoomApp key="i" />, false],
  ["Skype", <Skype key="i" />, true], ["XLaunch", <XLaunch key="i" />, true], ["Acrobat", <Acrobat key="i" />, true],
  ["X server", <XMark key="i" w={32} h={32} c="#26221f" />, true],
];

const Select = ({ value, w, off, label, gap }: { value: string; w: number; off?: boolean; label: string; gap?: number }) => (
  <Combo $w={w} $off={off} $gap={gap}>
    <select disabled={off} aria-label={label} defaultValue={value}><option>{value}</option></select>
    <ComboArrow $off={off} />
  </Combo>
);
const Tool = ({ label, on, children }: { label: string; on?: boolean; children: React.ReactNode }) => (
  <ToolButton type="button" aria-label={label} $on={on}>{children}</ToolButton>
);

export default function App() {
  return (
    <Screen>
      <GlobalStyle />
      <HostTitle>
        <XMark />
        <span>aic</span>
        <HostControls>
          <HostButton aria-label="Minimize"><Ico w={8} h={8}><path d="M0 6.500H8" stroke="#222" strokeWidth="2" /></Ico></HostButton>
          <HostButton aria-label="Restore"><Ico w={10} h={10}><path d="M.5 2.500H7.500V9.500H.5ZM2 .5H9.500V8" stroke="#222" /><path d="M0 3.500H8" stroke="#222" /></Ico></HostButton>
          <HostButton $close aria-label="Close"><Ico w={8} h={8}><path d="M.5 .5L7.500 7.500M7.500 .5L.5 7.500" stroke="#fff" strokeWidth="1.800" /></Ico></HostButton>
        </HostControls>
      </HostTitle>

      <DeskPanel>
        <Mate />
        <span>Applications</span><span>Places</span><span>System</span>
        <PanelIcons><Cabinet /><Terminal /><Firefox /></PanelIcons>
        <PanelTray><Speaker /><Computers /><time>Sat 16 Jan, 14:52</time></PanelTray>
      </DeskPanel>

      <WindowTitle>
        <Dot />
        <TitleText>Virtuoso (R) Visualization &amp; Analysis XL</TitleText>
        <WindowButtons>
          <RoundButton aria-label="Minimize window"><Chevron d="M1 2.500L4 5.500 7 2.500" /></RoundButton>
          <RoundButton aria-label="Maximize window"><Chevron d="M1 5.500L4 2.500 7 5.500" /></RoundButton>
          <RoundButton aria-label="Close window"><Chevron d="M1 1L7 7M7 1L1 7" /></RoundButton>
        </WindowButtons>
      </WindowTitle>

      <MenuBar>
        {menus.map(([name, k]) => (
          <button type="button" key={name}>{name.slice(0, k)}<u>{name[k]}</u>{name.slice(k + 1)}</button>
        ))}
        <Logo>c<LogoA>a</LogoA>dence</Logo>
      </MenuBar>

      <ToolBars>
        <ToolBar>
          <Section $w={207}>
            <Grip />
            <Tool label="Undo"><Undo /></Tool><Tool label="Redo"><Undo flip /></Tool><Tool label="Cut"><Cut /></Tool>
            <Tool label="Copy"><Copy /></Tool><Tool label="Paste"><Paste /></Tool><Tool label="Delete"><Delete /></Tool>
          </Section>
          <Section $w={338}>
            <Grip />
            <Field>Layout:<Select value="Auto" w={101} label="Layout" /></Field>
            <More aria-label="More layout tools">»</More>
          </Section>
          <Section>
            <Grip />
            <Field>Workspace:<Select value="Classic" w={144} label="Workspace" gap={5} /></Field>
            <Tool label="Save workspace"><SaveWs /></Tool><Tool label="Hide workspace"><HideWs /></Tool>
          </Section>
        </ToolBar>
        <ToolBar>
          <Section $w={239}>
            <Grip />
            <Tool label="Back"><Nav /></Tool><Tool label="Forward"><Nav flip /></Tool>
            <Tool label="Zoom fit"><Lens mark="M8 3V13M3 8H13M5 5L11 11M11 5L5 11" /></Tool>
            <Tool label="Zoom in"><Lens mark="M8 4V12M4 8H12" two /></Tool>
            <Tool label="Zoom out"><Lens mark="M4 8H12" two /></Tool>
            <Tool label="Zoom wave"><WaveLens /></Tool>
            <More aria-label="More zoom tools">»</More>
          </Section>
          <Section $w={269}>
            <Grip />
            <Tool label="Previous point"><Step /></Tool><Tool label="Next point"><Step flip /></Tool>
            <Select value="Data Point" w={142} off label="Step by" />
            <ValueInput aria-label="Step value" defaultValue="56970u" disabled />
          </Section>
          <Section $w={44}><Grip /><Tool label="Calculator"><Calculator /></Tool></Section>
          <Section $w={76}><Grip /><Tool label="Flag"><RedFlag /></Tool><Tool label="Info balloon" on><Info /></Tool></Section>
          <Section>
            <Grip />
            <Select value="family" w={79} label="Select mode" />
            <Tool label="Split strips"><WaveArrows /></Tool><Tool label="Swap strips"><WaveTurn /></Tool><Tool label="Combine strips"><WaveSqueeze /></Tool>
          </Section>
        </ToolBar>
      </ToolBars>

      <TabStrip>
        <Tab>
          <PlotIcon />
          <span>AICClass_project Three_sta...</span>
          <TabClose aria-label="Close tab"><Ico w={8} h={8}><path d="M1 1L7 7M7 1L1 7" stroke="#fff" strokeWidth="2" /></Ico></TabClose>
        </Tab>
      </TabStrip>

      <PlotArea>
        <PlotOuter>
          <PlotInner>
            <PlotTitle>DC Response</PlotTitle>
            <PlotBody>
              <Legend>
                <TraceTable>
                  <colgroup><col /><col style={{ width: 31 }} /></colgroup>
                  <thead><tr><th scope="col">Name</th><th scope="col">Vis</th></tr></thead>
                  <tbody>
                    <tr>
                      <td><NameCell><Branch /><TraceName $sel><Swatch $c="#b0523f" />/Vout3</TraceName></NameCell></td>
                      <td><EyeButton $sel aria-label="Toggle /Vout3"><Eye dim /></EyeButton></td>
                    </tr>
                    <tr>
                      <td><NameCell><Branch $last /><TraceName><Swatch $c="#ff0000" />/Vin_p</TraceName></NameCell></td>
                      <td><EyeButton aria-label="Toggle /Vin_p"><Eye /></EyeButton></td>
                    </tr>
                  </tbody>
                </TraceTable>
              </Legend>
              <Chart />
            </PlotBody>
          </PlotInner>
        </PlotOuter>
      </PlotArea>

      <MouseBar>
        <MouseLeft><Grip $h={6} />mouse L:</MouseLeft><span>M:</span><span>R:</span>
      </MouseBar>
      <StatusBar>
        <StatusCode>8(15)</StatusCode>
        <StatusText>no error</StatusText>
        <StatusBlock />
      </StatusBar>
      <WindowList>
        <DeskFolder /><ListGrip />
        {windows.map(([name, icon], i) => (
          <TaskButton type="button" key={i} $on={i === 7}>{icon}{name}</TaskButton>
        ))}
        <Pager>
          <Desk $on aria-label="Desktop 1"><VivaIcon /></Desk><Desk aria-label="Desktop 2" /><Desk aria-label="Desktop 3" /><Desk aria-label="Desktop 4" />
        </Pager>
      </WindowList>

      <TaskBar>
        <StartButton aria-label="Start"><StartLogo /></StartButton>
        {apps.map(([name, icon, open], i) => (
          <AppButton key={name} aria-label={name} $open={open} $focus={i === 9}>{icon}</AppButton>
        ))}
        <Tray>
          <Keyboard />
          <Ico w={20} h={6}><path d="M6 6L10 1 14 6Z" fill="#fff" /></Ico>
          <TrayFlag /><Signal /><Battery /><Volume />
          <Clock>14:52<br />16/01/2021</Clock>
        </Tray>
      </TaskBar>
    </Screen>
  );
}
